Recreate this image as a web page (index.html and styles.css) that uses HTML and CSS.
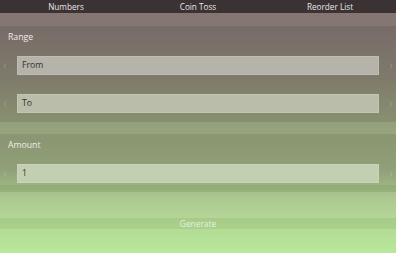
FILE: index.html
```html
<!DOCTYPE html>
<html>
<head>
<meta charset="utf-8">
<link rel="stylesheet" href="styles.css">
</head>
<body>
<div class="app">
  <nav class="tabs">
    <span class="tab">Numbers</span>
    <span class="tab">Coin Toss</span>
    <span class="tab">Reorder List</span>
  </nav>
  <div class="band band-top"></div>
  <section class="section section-range">
    <div class="label">Range</div>
    <div class="rows">
      <div class="row">
        <span class="chev"><svg width="4" height="6" viewBox="0 0 4 6"><polyline points="3,0.5 1,3 3,5.5" fill="none" stroke="currentColor" stroke-width="0.8"/></svg></span>
        <div class="input input-from">From</div>
        <span class="chev chev-r"><svg width="4" height="6" viewBox="0 0 4 6"><polyline points="1,0.5 3,3 1,5.5" fill="none" stroke="currentColor" stroke-width="0.8"/></svg></span>
      </div>
      <div class="row">
        <span class="chev"><svg width="4" height="6" viewBox="0 0 4 6"><polyline points="3,0.5 1,3 3,5.5" fill="none" stroke="currentColor" stroke-width="0.8"/></svg></span>
        <div class="input input-to">To</div>
        <span class="chev chev-r"><svg width="4" height="6" viewBox="0 0 4 6"><polyline points="1,0.5 3,3 1,5.5" fill="none" stroke="currentColor" stroke-width="0.8"/></svg></span>
      </div>
    </div>
  </section>
  <div class="band band-mid"></div>
  <section class="section section-amount">
    <div class="label">Amount</div>
    <div class="rows">
      <div class="row">
        <span class="chev"><svg width="4" height="6" viewBox="0 0 4 6"><polyline points="3,0.5 1,3 3,5.5" fill="none" stroke="currentColor" stroke-width="0.8"/></svg></span>
        <div class="input input-amount">1</div>
        <span class="chev chev-r"><svg width="4" height="6" viewBox="0 0 4 6"><polyline points="1,0.5 3,3 1,5.5" fill="none" stroke="currentColor" stroke-width="0.8"/></svg></span>
      </div>
    </div>
  </section>
  <div class="band band-dark"></div>
  <div class="spacer"></div>
  <button class="generate">Generate</button>
  <div class="footer"></div>
</div>
</body>
</html>
```
FILE: styles.css
```css
html, body {
  margin: 0;
  padding: 0;
}
body {
  width: 396px;
  height: 253px;
  overflow: hidden;
  font-family: "Open Sans", "Noto Sans", sans-serif;
}
.app {
  height: 253px;
  display: flex;
  flex-direction: column;
  background: linear-gradient(to bottom, #7a6a68 0px, #786c68 30px, #7f7b6b 80px, #8a9472 130px, #90a078 170px, #a9c78c 200px, #b3dc95 230px, #bae89c 253px);
}
.tabs {
  height: 13px;
  flex: none;
  display: grid;
  grid-template-columns: 1fr 1fr 1fr;
  background: #3b3234;
  color: #ece6e6;
  font-size: 8.2px;
  line-height: 13px;
  text-align: center;
}
.band {
  flex: none;
}
.band-top {
  height: 13px;
  background: rgba(255, 235, 235, 0.09);
}
.section {
  flex: none;
  display: flex;
  flex-direction: column;
}
.label {
  color: #f0ece6;
  font-size: 8.7px;
  line-height: 12px;
  padding-left: 8px;
}
.section-range {
  height: 96px;
  padding-top: 5px;
  box-sizing: border-box;
}
.section-range .label {
  margin-bottom: 13px;
}
.rows {
  display: flex;
  flex-direction: column;
  gap: 19px;
}
.row {
  display: flex;
  align-items: center;
  height: 19px;
}
.chev {
  width: 17px;
  flex: none;
  display: flex;
  align-items: center;
  justify-content: flex-start;
  padding-left: 3px;
  box-sizing: border-box;
  color: rgba(255, 255, 255, 0.25);
  height: 19px;
}
.chev-r {
  padding-left: 0;
  justify-content: flex-end;
  padding-right: 3px;
}
.chev svg {
  display: block;
}
.input {
  flex: 1;
  height: 19px;
  box-sizing: border-box;
  border: 1px solid rgba(255, 255, 255, 0.12);
  padding-left: 4px;
  font-size: 8.7px;
  line-height: 17px;
  color: #34322c;
}
.input-from {
  background: #b5b3aa;
}
.input-to {
  background: #b9bdaa;
}
.input-amount {
  background: #c3cfb1;
}
.band-mid {
  height: 12px;
  background: rgba(230, 255, 200, 0.14);
}
.section-amount {
  height: 51px;
  padding-top: 5px;
  box-sizing: border-box;
}
.section-amount .label {
  margin-bottom: 13px;
}
.band-dark {
  height: 7px;
  background: rgba(60, 90, 30, 0.1);
}
.spacer {
  height: 26px;
  flex: none;
  background: rgba(255, 255, 255, 0.06);
}
.generate {
  flex: none;
  height: 11px;
  border: 0;
  margin: 0;
  padding: 0;
  background: rgba(60, 100, 30, 0.08);
  color: rgba(245, 248, 240, 0.85);
  font-family: "Open Sans", "Noto Sans", sans-serif;
  font-size: 8.4px;
  line-height: 11px;
  text-align: center;
}
.footer {
  flex: 1;
}
```
